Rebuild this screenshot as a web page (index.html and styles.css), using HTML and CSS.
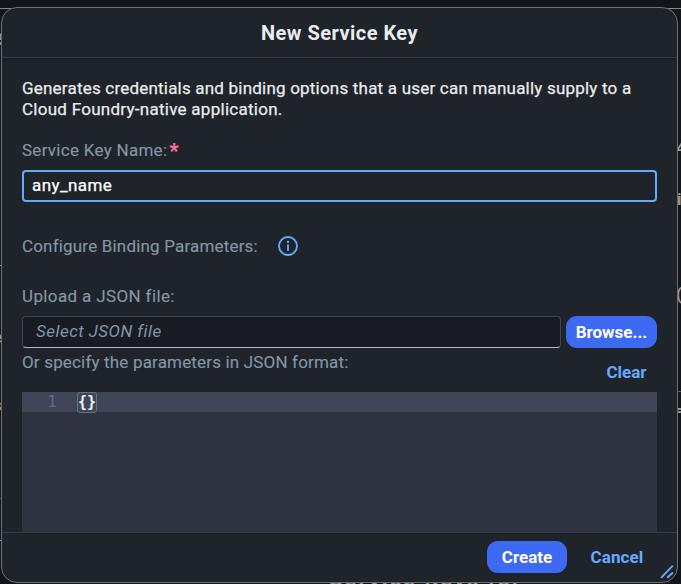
FILE: index.html
```html
<!DOCTYPE html>
<html lang="en">
<head>
<meta charset="utf-8">
<title>New Service Key</title>
<link rel="stylesheet" href="styles.css">
</head>
<body>
<div class="backdrop" aria-hidden="true">
  <span class="rule rule-top"></span>
  <span class="rule rule-l1"></span>
  <span class="rule rule-l2"></span>
  <span class="rule rule-l3"></span>
  <span class="rule rule-r1"></span>
  <span class="behind b-left">e</span>
  <span class="behind b-l2">e</span>
  <span class="behind b-l3">s</span>
  <span class="behind b-r1">4</span>
  <span class="behind b-r2">i</span>
  <span class="behind b-r3">(3</span>
  <span class="behind b-r4">=</span>
  <span class="behind b-bottom">Service Keys for</span>
</div>
<section class="dialog" role="dialog" aria-labelledby="title">
  <header class="header"><h1 id="title" class="title">New Service Key</h1></header>
  <main class="content">
    <p class="intro"><span class="intro-a">Generates credentials and binding options that a user can manually supply to a</span><br><span class="intro-b">Cloud Foundry-native application.</span></p>
    <label class="label name-label" for="name">Service Key Name:<span class="required">*</span></label>
    <input id="name" class="name-input" value="any_name">
    <div class="config-row">
      <span class="label config-label">Configure Binding Parameters:</span>
      <svg class="info" viewBox="0 0 20 20" fill="none"><circle cx="10" cy="10" r="9" stroke="currentColor" stroke-width="1.9"/><path d="M10 9.2v5" stroke="currentColor" stroke-width="1.8" stroke-linecap="round"/><circle cx="10" cy="6" r="1.15" fill="currentColor"/></svg>
    </div>
    <span class="label upload-label">Upload a JSON file:</span>
    <div class="upload-row">
      <div class="file"><span class="placeholder">Select JSON file</span></div>
      <button class="button browse">Browse...</button>
    </div>
    <div class="json-row">
      <span class="label json-label">Or specify the parameters in JSON format:</span>
      <button class="link clear">Clear</button>
    </div>
    <div class="editor"><div class="line"><span class="number">1</span><code class="code">{}</code></div></div>
  </main>
  <footer class="footer">
    <button class="button create">Create</button>
    <button class="link cancel">Cancel</button>
    <svg class="grip" viewBox="0 0 14 14" fill="none" stroke="currentColor" stroke-width="1.9" stroke-linecap="round"><path d="M1.5 12.3 12.3 1.2M7.8 12.3l4.5-4.3"/></svg>
  </footer>
</section>
</body>
</html>
```
FILE: styles.css
```css
* { box-sizing: border-box; }
body {
  margin: 0;
  width: 681px;
  height: 584px;
  overflow: hidden;
  padding: 7px 0 0 1px;
  background: #12161b;
  font-family: Roboto, "Noto Sans", sans-serif;
  font-size: 17px;
  color: #eaecee;
}
button, input { font: inherit; border: 0; padding: 0; margin: 0; }
.backdrop { position: absolute; inset: 0; overflow: hidden; }
.rule { position: absolute; height: 1px; background: #8a8a8a; }
.rule-top { top: 8px; left: 0; right: 0; }
.rule-l1 { top: 265px; left: 0; width: 3px; }
.rule-l2 { top: 498px; left: 0; width: 3px; background: #41454a; }
.rule-l3 { top: 540px; left: 0; width: 3px; }
.rule-r1 { top: 391px; right: 0; width: 4px; background: #55585c; }
.behind { position: absolute; color: #969696; font-weight: 700; line-height: 20px; }
.b-left { left: -8px; top: 28px; font-size: 22px; }
.b-l2 { left: -7px; top: 327px; }
.b-l3 { left: -7px; top: 395px; }
.b-r1 { left: 676px; top: 138px; }
.b-r2 { left: 677px; top: 189px; }
.b-r3 { left: 676px; top: 284px; }
.b-r4 { left: 676px; top: 400px; }
.b-bottom { left: 329px; top: 569px; font-size: 22px; white-space: nowrap; letter-spacing: 2px; }
.dialog {
  position: relative;
  display: flex;
  flex-direction: column;
  width: 677px;
  height: 576px;
  overflow: hidden;
  border: 1px solid #6d6f71;
  border-radius: 16px;
  background: #1f232a;
}
.header {
  flex: none;
  display: flex;
  align-items: center;
  justify-content: center;
  height: 50px;
  border-bottom: 1px solid #333a48;
  box-shadow: 0 1px 2px #171a20;
}
.title { margin: 0; font-size: 20px; line-height: 24px; font-weight: 700; letter-spacing: .47px; }
.content { flex: 1; min-height: 0; display: flex; flex-direction: column; padding: 20px 20px 0; }
.intro { margin: 0; line-height: 21px; white-space: nowrap; -webkit-text-stroke: .25px currentColor; }
.intro-a { letter-spacing: .205px; }
.intro-b { letter-spacing: .27px; }
.label { color: #8396a8; line-height: 22px; white-space: nowrap; -webkit-text-stroke: .15px currentColor; }
.name-label { height: 22px; margin-top: 19px; letter-spacing: .28px; }
.config-label { letter-spacing: .18px; }
.upload-label { letter-spacing: .37px; }
.json-label { letter-spacing: .17px; }
.placeholder { letter-spacing: .47px; }
.required { display: inline-block; color: #fa7096; font-weight: 900; font-size: 20px; line-height: 20px; height: 20px; margin: 2px 0 0 2px; vertical-align: top; }
.name-input {
  flex: none;
  width: 635px;
  height: 32px;
  margin-top: 9px;
  padding: 0 8px 2px;
  border: 2px solid #64abff;
  border-radius: 4px;
  background: #1f232a;
  color: #fff;
  outline: 0;
  letter-spacing: .4px;
  -webkit-text-stroke: .25px currentColor;
}
.config-row { display: flex; align-items: center; gap: 20px; margin-top: 33px; }
.info { width: 20px; height: 20px; color: #64abff; }
.upload-label { margin-top: 28px; }
.upload-row { display: flex; gap: 5px; margin-top: 9px; }
.file {
  width: 539px;
  height: 32px;
  padding: 0 13px;
  border: 1px solid #41464e;
  border-bottom-color: #b4b8c6;
  border-radius: 4px;
  background: #181c22;
  color: #8396a8;
  font-style: italic;
  line-height: 28px;
}
.button { height: 32px; border-radius: 11px; background: #3e69f2; color: #fff; font-weight: 700; }
.browse { width: 91px; padding-bottom: 1px; }
.json-row { display: flex; justify-content: space-between; height: 44px; padding-top: 3px; }
.link { background: none; color: #64abff; font-weight: 700; }
.clear { width: 61px; height: 42px; }
.editor { flex: none; height: 140px; background: #303440; }
.line { display: flex; align-items: center; height: 20px; background: #414558; font: 16px/20px "DejaVu Sans Mono", monospace; }
.number { width: 35px; text-align: right; color: #626a88; }
.code { margin-left: 20px; width: 20px; height: 21px; border: 1px solid #5c7686; border-radius: 3px; font: 700 15px/18px "DejaVu Sans Mono", monospace; color: #f1f1f8; }
.footer {
  position: relative;
  flex: none;
  display: flex;
  align-items: center;
  justify-content: flex-end;
  gap: 9px;
  height: 50px;
  padding: 0 19px 1px 0;
  border-top: 1px solid #333a48;
}
.create { width: 80px; }
.cancel { width: 82px; height: 32px; letter-spacing: .1px; }
.grip { position: absolute; right: 3px; bottom: 3px; width: 14px; height: 14px; color: #64abff; }
```
